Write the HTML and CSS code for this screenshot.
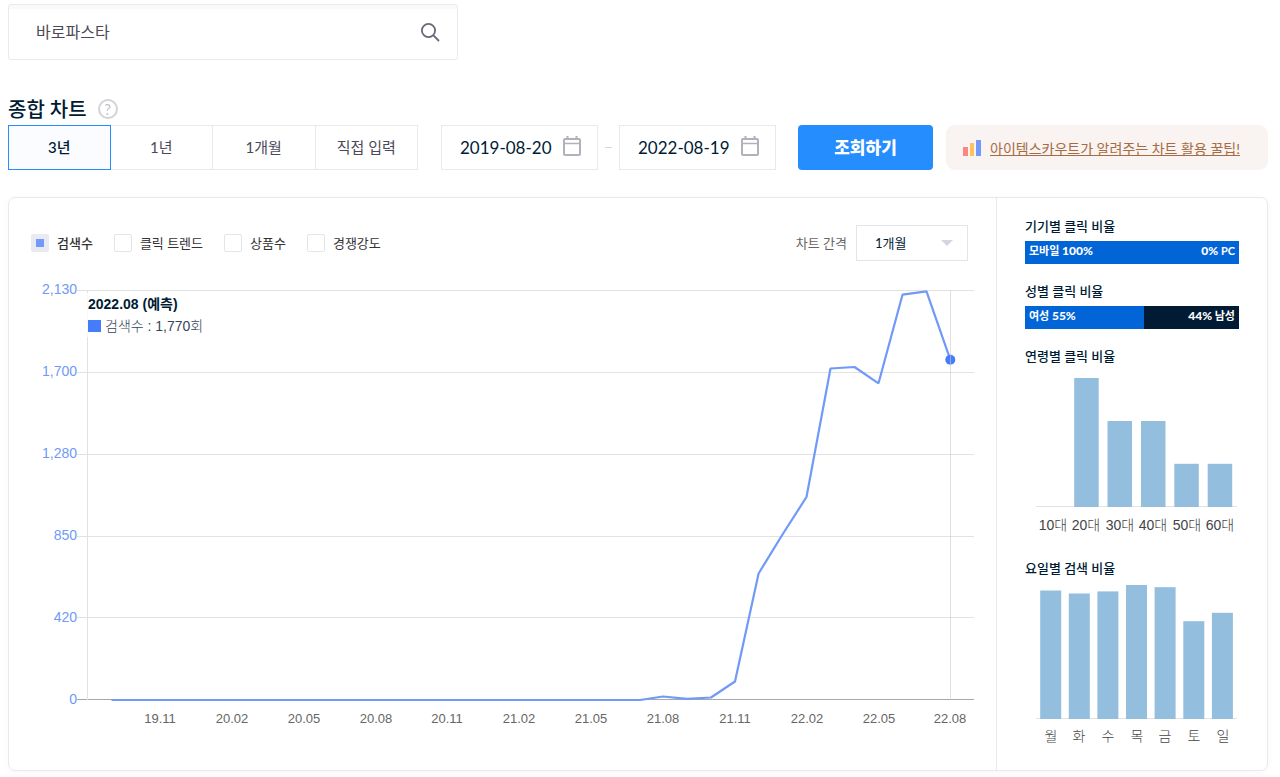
FILE: index.html
```html
<!DOCTYPE html>
<html lang="ko">
<head>
<meta charset="utf-8">
<meta name="viewport" content="width=device-width, initial-scale=1">
<title>종합 차트</title>
<link rel="stylesheet" href="styles.css">
</head>
<body>
<main class="page">
  <form class="search" role="search">
    <input class="search-input" type="text" value="바로파스타" aria-label="키워드 검색">
    <button class="search-button" type="button" aria-label="검색">
      <svg width="20" height="20" viewBox="0 0 20 20" fill="none" stroke="#686878" stroke-width="1.800"><circle cx="8.500" cy="8.500" r="6.600"/><path d="M13.200 13.200L19 19"/></svg>
    </button>
  </form>

  <header class="heading">
    <h1 class="title">종합 차트</h1>
    <button class="help" type="button" aria-label="도움말">?</button>
  </header>

  <div class="filters">
    <div class="periods">
      <button class="period period-active" type="button">3년</button>
      <button class="period" type="button">1년</button>
      <button class="period" type="button">1개월</button>
      <button class="period" type="button">직접 입력</button>
    </div>
    <div class="range">
      <label class="date">
        <input class="date-input" type="text" value="2019-08-20" aria-label="시작일">
        <svg class="date-icon" width="20" height="22" viewBox="0 0 20 22" fill="none" stroke="#b2b1ba" stroke-width="2"><rect x="2" y="4" width="16" height="16" rx="1"/><path d="M2 8.500H18" stroke-width="1.500"/><path d="M5.500 1V4M14.500 1V4"/></svg>
      </label>
      <span class="range-dash"></span>
      <label class="date">
        <input class="date-input" type="text" value="2022-08-19" aria-label="종료일">
        <svg class="date-icon" width="20" height="22" viewBox="0 0 20 22" fill="none" stroke="#b2b1ba" stroke-width="2"><rect x="2" y="4" width="16" height="16" rx="1"/><path d="M2 8.500H18" stroke-width="1.500"/><path d="M5.500 1V4M14.500 1V4"/></svg>
      </label>
    </div>
    <button class="submit" type="button">조회하기</button>
    <div class="tip">
      <svg class="tip-icon" width="18" height="16" viewBox="0 0 18 16"><rect y="7" width="5" height="9" fill="#fb8785"/><rect x="7" y="3" width="4" height="13" fill="#ffc35c"/><rect x="13" width="5" height="16" fill="#7499fa"/></svg>
      <a class="tip-link" href="#">아이템스카우트가 알려주는 차트 활용 꿀팁!</a>
    </div>
  </div>

  <section class="card">
    <div class="trend">
      <div class="toolbar">
        <div class="series">
          <label class="check check-on"><input class="check-box" type="checkbox" checked>검색수</label>
          <label class="check"><input class="check-box" type="checkbox">클릭 트렌드</label>
          <label class="check"><input class="check-box" type="checkbox">상품수</label>
          <label class="check"><input class="check-box" type="checkbox">경쟁강도</label>
        </div>
        <div class="interval">
          <label class="interval-label" for="interval">차트 간격</label>
          <span class="select">
            <select class="select-input" id="interval"><option>1개월</option></select>
            <svg class="select-arrow" width="12" height="6" viewBox="0 0 12 6"><path d="M0 0H12L6 6Z" fill="#d5d6dd"/></svg>
          </span>
        </div>
      </div>
      <div class="plot">
        <svg class="plot-svg" viewBox="0 0 944 450" role="img" aria-label="월별 검색수">
          <path d="M46 10.500H943M46 92.500H943M46 174.500H943M46 256.500H943M46 337.500H943" stroke="#e2e2e2" fill="none"/>
          <path d="M46 419.500H943" stroke="#a8a8a8"/>
          <path d="M56.500 10V420" stroke="#e2e2e2"/>
          <polyline fill="none" stroke="#7099f8" stroke-width="2.200" stroke-linejoin="bevel" points="80.500,420 609,420 632,416.500 656,418.800 680,417.500 704,401.500 727.600,293.500 751.500,254.500 775.500,217 799.500,88.500 823.500,87 847.500,103.300 871.500,14.700 895.500,11.300 919.300,79.700"/>
          <circle cx="919.300" cy="79.700" r="5" fill="#457cfc"/>
          <path d="M919.500 10V420" stroke="#ccc" stroke-opacity=".6"/>
          <g class="axis-y">
            <text x="46" y="14">2,130</text><text x="46" y="96">1,700</text><text x="46" y="178">1,280</text><text x="46" y="260">850</text><text x="46" y="342">420</text><text x="46" y="424">0</text>
          </g>
          <g class="axis-x">
            <text x="129" y="443">19.11</text><text x="201" y="443">20.02</text><text x="273" y="443">20.05</text><text x="345" y="443">20.08</text><text x="416" y="443">20.11</text><text x="488" y="443">21.02</text><text x="560" y="443">21.05</text><text x="632" y="443">21.08</text><text x="704" y="443">21.11</text><text x="776" y="443">22.02</text><text x="848" y="443">22.05</text><text x="919" y="443">22.08</text>
          </g>
        </svg>
        <div class="tooltip">
          <strong class="tooltip-title">2022.08 (예측)</strong>
          <span class="tooltip-row"><i class="tooltip-mark"></i>검색수 : 1,770회</span>
        </div>
      </div>
    </div>

    <aside class="ratios">
      <h2 class="ratio-title">기기별 클릭 비율</h2>
      <div class="split">
        <div class="split-first" style="width:100%"></div>
        <div class="split-text"><span>모바일 <b class="split-value">100%</b></span><span><b class="split-value">0%</b> PC</span></div>
      </div>
      <h2 class="ratio-title">성별 클릭 비율</h2>
      <div class="split">
        <div class="split-first" style="width:55.5%"></div>
        <div class="split-text"><span>여성 <b class="split-value">55%</b></span><span><b class="split-value">44%</b> 남성</span></div>
      </div>
      <h2 class="ratio-title">연령별 클릭 비율</h2>
      <svg class="bars" viewBox="0 0 214 192" role="img" aria-label="연령별 클릭 비율">
        <path d="M11 140.500H212" stroke="#e2e2e2"/>
        <g fill="#93bede"><rect x="49.200" y="12" width="24.500" height="129"/><rect x="82.500" y="55" width="24.500" height="86"/><rect x="116" y="55" width="24.500" height="86"/><rect x="149.300" y="97.800" width="24.500" height="43.200"/><rect x="182.700" y="97.800" width="24.500" height="43.200"/></g>
        <g class="bar-labels"><text x="28" y="164">10대</text><text x="61" y="164">20대</text><text x="95" y="164">30대</text><text x="128" y="164">40대</text><text x="162" y="164">50대</text><text x="195" y="164">60대</text></g>
      </svg>
      <h2 class="ratio-title">요일별 검색 비율</h2>
      <svg class="bars" viewBox="0 0 214 172" role="img" aria-label="요일별 검색 비율">
        <path d="M11 140.500H212" stroke="#e2e2e2"/>
        <g fill="#93bede"><rect x="15.200" y="12.500" width="21" height="128.500"/><rect x="43.800" y="15.500" width="21" height="125.500"/><rect x="72.400" y="13.400" width="21" height="127.600"/><rect x="101" y="7" width="21" height="134"/><rect x="129.600" y="9.200" width="21" height="131.800"/><rect x="158.300" y="43.200" width="21" height="97.800"/><rect x="186.900" y="34.800" width="21" height="106.200"/></g>
        <g class="bar-labels"><text x="26" y="163">월</text><text x="54" y="163">화</text><text x="83" y="163">수</text><text x="112" y="163">목</text><text x="140" y="163">금</text><text x="169" y="163">토</text><text x="198" y="163">일</text></g>
      </svg>
    </aside>
  </section>
</main>
</body>
</html>
```
FILE: styles.css
```css
* { box-sizing: border-box; }

body {
  margin: 0;
  background: #fff;
  color: #001b33;
  font-family: Lato, "Noto Sans CJK KR", sans-serif;
}

button, input, select { font: inherit; color: inherit; }
button { cursor: pointer; }

.page { padding: 4px 12px 6px 8px; }

.search {
  display: flex;
  align-items: center;
  width: 450px;
  max-width: 100%;
  height: 56px;
  padding: 0 17px 0 27px;
  border: 1px solid #e9e9ee;
  border-radius: 3px;
  box-shadow: inset 0 4px 0 #f9f9fb;
}
.search-input {
  flex: 1;
  min-width: 0;
  padding: 0;
  border: 0;
  outline: 0;
  background: none;
  color: #4b4958;
  font-size: 16px;
  line-height: 22px;
}
.search-button { display: flex; padding: 0; border: 0; background: none; }

.heading {
  display: flex;
  align-items: center;
  gap: 11px;
  height: 28px;
  margin: 35px 0 2px;
}
.title { margin: 0; font-size: 20px; font-weight: 500; line-height: 28px; }
.help {
  width: 20px;
  height: 20px;
  padding: 0;
  border: 2px solid #d2d2d8;
  border-radius: 50%;
  background: #fff;
  color: #c0c0c8;
  font-size: 15px;
  line-height: 16px;
}

.filters { display: flex; height: 45px; }
.periods { display: grid; grid-template-columns: repeat(4, 1fr); flex: 0 0 410px; }
.period {
  padding: 0 0 2px;
  border: 1px solid #e9e9ec;
  border-left-width: 0;
  background: #fff;
  color: #4b4958;
  font-size: 15px;
  line-height: 22px;
}
.period-active {
  border: 1px solid #268dff;
  background: #fafcff;
  color: #001b33;
  font-weight: 500;
}

.range {
  display: flex;
  align-items: center;
  flex: 0 0 335px;
  gap: 7px;
  min-width: 0;
  margin-left: 23px;
}
.date {
  display: flex;
  align-items: center;
  flex: 1;
  min-width: 0;
  height: 45px;
  padding: 0 15px 0 18px;
  border: 1px solid #e9e9ec;
}
.date-input {
  flex: 1;
  width: 100%;
  min-width: 0;
  padding: 0;
  border: 0;
  outline: 0;
  background: none;
  font-size: 17px;
  line-height: 24px;
}
.date-icon { flex: none; margin-bottom: 4px; }
.range-dash { flex: none; width: 7px; height: 1px; background: #d5d6dd; }

.submit {
  flex: 0 0 135px;
  margin-left: 22px;
  padding: 0 0 2px;
  border: 0;
  border-radius: 4px;
  background: #268dff;
  color: #fff;
  font-size: 17px;
  font-weight: 900;
}
.tip {
  display: flex;
  align-items: center;
  flex: 1;
  gap: 9px;
  min-width: 0;
  margin-left: 13px;
  padding-left: 17px;
  border-radius: 9px;
  background: #f9f3f1;
}
.tip-icon { flex: none; }
.tip-link { color: #a56c43; font-size: 14px; white-space: nowrap; }

.card {
  display: flex;
  margin-top: 27px;
  border: 1px solid #e9e9ec;
  border-radius: 7px;
  box-shadow: 0 2px 10px rgba(0, 0, 0, .03);
}
.trend {
  flex: 1;
  min-width: 0;
  padding: 27px 21px 40px 22px;
  border-right: 1px solid #e9e9ec;
}
.toolbar { display: flex; justify-content: space-between; align-items: center; padding-right: 7px; }
.series { display: flex; gap: 21px; }
.check {
  display: flex;
  align-items: center;
  gap: 8px;
  color: #333;
  font-size: 13px;
  line-height: 20px;
}
.check-on { font-weight: 500; }
.check-box {
  appearance: none;
  width: 18px;
  height: 18px;
  margin: 0;
  border: 1px solid #e4e4ec;
  border-radius: 2px;
  background: #fff;
}
.check-box:checked { border: 5px solid #e9e9f1; background: #7099f8; }

.interval { display: flex; align-items: center; gap: 9px; }
.interval-label { color: #666; font-size: 13px; line-height: 20px; }
.select { position: relative; width: 112px; height: 36px; }
.select-input {
  appearance: none;
  width: 100%;
  height: 100%;
  padding: 0 18px;
  border: 1px solid #e4e4ec;
  border-radius: 0;
  background: #fff;
  font-size: 13px;
}
.select-arrow { position: absolute; top: 15px; right: 15px; pointer-events: none; }

.plot { position: relative; margin-top: 19px; }
.plot-svg { display: block; width: 100%; font-family: "Liberation Sans", "Noto Sans CJK KR", sans-serif; }
.axis-y { fill: #7099f8; font-size: 14px; text-anchor: end; }
.axis-x { fill: #666; font-size: 13px; text-anchor: middle; }
.tooltip {
  position: absolute;
  top: 13px;
  left: 56px;
  display: flex;
  flex-direction: column;
  padding: 0 1px;
  background: rgba(255, 255, 255, .8);
  font-family: "Liberation Sans", "Noto Sans CJK KR", sans-serif;
  font-size: 14px;
  line-height: 22px;
}
.tooltip-row { display: flex; align-items: center; gap: 4px; color: #33475a; font-weight: 300; }
.tooltip-mark { width: 13px; height: 12px; background: #457cfc; }

.ratios { flex: 0 0 270px; padding: 18px 28px 0; }
.ratio-title { margin: 0; font-size: 13px; font-weight: 500; line-height: 20px; }
.split { position: relative; height: 23px; margin: 5px 0 17px; background: #001b33; }
.split-first { height: 100%; background: #0265d7; }
.split-text {
  position: absolute;
  inset: 0;
  display: flex;
  justify-content: space-between;
  padding: 0 4px;
  color: #fff;
  font-size: 11px;
  font-weight: 700;
  line-height: 20px;
}
.split-value { font-size: 12px; font-weight: 900; }
.bars { display: block; width: 100%; }
.bar-labels {
  fill: #444;
  font-family: "Liberation Sans", "Noto Sans CJK KR", sans-serif;
  font-size: 14px;
  font-weight: 300;
  text-anchor: middle;
}
```
